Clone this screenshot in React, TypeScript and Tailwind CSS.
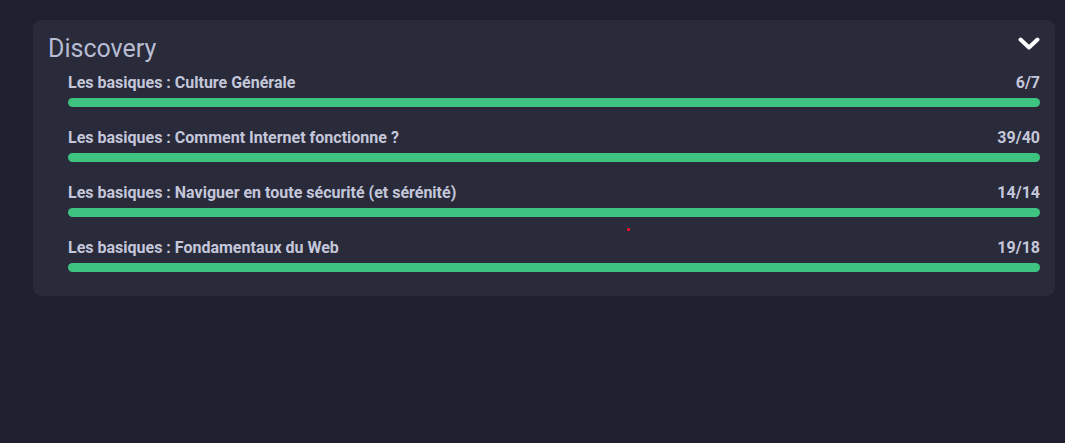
type Course = {
  title: string;
  done: number;
  total: number;
};

const courses: Course[] = [
  { title: "Les basiques : Culture Générale", done: 6, total: 7 },
  { title: "Les basiques : Comment Internet fonctionne ?", done: 39, total: 40 },
  { title: "Les basiques : Naviguer en toute sécurité (et sérénité)", done: 14, total: 14 },
  { title: "Les basiques : Fondamentaux du Web", done: 19, total: 18 },
];

const CourseRow = ({ course }: { course: Course }) => {
  return (
    <div className="flex flex-col">
      <div className="flex justify-between text-base leading-6 font-bold text-[#c4c7da]">
        <p>{course.title}</p>
        <p>
          {course.done}/{course.total}
        </p>
      </div>
      {/* progress bar, always full in the screenshot */}
      <div className="mt-[3px] h-[9px] w-full rounded-full bg-[#3ec381]"></div>
    </div>
  );
};

const App = () => {
  return (
    <div
      className="min-h-screen bg-[#1f1f2d] pl-[33px] pr-[10px] pt-5"
      style={{ fontFamily: "Roboto, 'Noto Sans', sans-serif" }}
    >
      <div className="relative rounded-lg bg-[#292a3a] pt-[13px] pb-6">
        <div className="flex items-start justify-between pl-[15px] pr-[15px]">
          <h2 className="text-[25px] leading-8 text-[#b7bcd3]">Discovery</h2>
          <svg className="mt-[4px]" width="22" height="13" viewBox="0 0 22 13" fill="none">
            <polyline
              points="2.5,2.5 11,10.5 19.5,2.5"
              stroke="white"
              strokeWidth="4"
              strokeLinecap="round"
              strokeLinejoin="round"
            />
          </svg>
        </div>
        <div className="mt-1.5 flex flex-col gap-[19px] pl-[35px] pr-[15px]">
          {courses.map((c) => (
            <CourseRow key={c.title} course={c} />
          ))}
        </div>
        {/* stray red pixel from the capture */}
        <div className="absolute left-[594px] top-[208px] h-[3px] w-[3px] bg-[#e0102a]"></div>
      </div>
    </div>
  );
};

export default App;
